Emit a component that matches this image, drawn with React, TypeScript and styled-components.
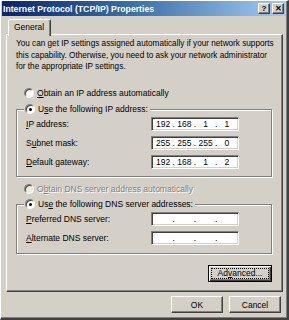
import React from 'react'
import styled, { createGlobalStyle } from 'styled-components'

const face = '#d4d0c8'
const shadow = '#808080'
const darkShadow = '#404040'

const GlobalStyle = createGlobalStyle`
  html, body {
    margin: 0;
    padding: 0;
    background: ${face};
  }
  * {
    box-sizing: border-box;
  }
`

const Window = styled.div`
  width: 289px;
  height: 320px;
  background: ${face};
  border-style: solid;
  border-width: 1px 2px 2px 1px;
  border-color: #fff ${darkShadow} ${darkShadow} #fff;
  box-shadow: inset -1px -1px ${shadow};
  font-family: 'Liberation Sans', Arial, sans-serif;
  font-size: 8.5px;
  color: #000;
  display: flex;
  flex-direction: column;
  padding: 0 1px 0 1px;
`

const TitleBar = styled.div`
  height: 15px;
  display: flex;
  align-items: center;
  justify-content: space-between;
  padding: 0 2px 0 1px;
  background: linear-gradient(to right, #0a246a 0%, #3a6ea5 45%, #a6caf0 100%);
`

const TitleText = styled.span`
  color: #fff;
  font-weight: bold;
  font-size: 8.7px;
  white-space: nowrap;
`

const TitleButtons = styled.div`
  display: flex;
  gap: 2px;
`

const TitleButton = styled.div`
  width: 12px;
  height: 11px;
  background: ${face};
  border-style: solid;
  border-width: 1px;
  border-color: #fff ${darkShadow} ${darkShadow} #fff;
  box-shadow: inset -1px -1px ${shadow};
  display: flex;
  align-items: center;
  justify-content: center;
  font-weight: bold;
  font-size: 8px;
  line-height: 1;
`

const TabStrip = styled.div`
  display: flex;
  padding: 3px 0 0 6px;
  position: relative;
  z-index: 1;
`

const Tab = styled.div`
  height: 17px;
  padding: 0 6px 2px 5px;
  margin-bottom: -2px;
  background: ${face};
  border-style: solid;
  border-width: 1px 1px 0 1px;
  border-color: #fff ${darkShadow} transparent #fff;
  border-radius: 2px 2px 0 0;
  box-shadow: inset -1px 0 ${shadow};
  display: flex;
  align-items: center;
`

const Panel = styled.div`
  margin: 0 3px 0 4px;
  height: 258px;
  border-style: solid;
  border-width: 1px;
  border-color: #fff ${darkShadow} ${darkShadow} #fff;
  box-shadow: inset -1px -1px ${shadow};
  padding: 3px 10px 0 9px;
  display: flex;
  flex-direction: column;
`

const Paragraph = styled.p`
  margin: 0;
  font-size: 8.2px;
  line-height: 11.5px;
  white-space: nowrap;
`

const RadioRow = styled.div<{ $disabled?: boolean; $top: number }>`
  display: flex;
  align-items: center;
  gap: 3px;
  height: 13px;
  margin-top: ${({ $top }) => $top}px;
  padding-left: 8px;
  color: ${({ $disabled }) => ($disabled ? shadow : '#000')};
  text-shadow: ${({ $disabled }) => ($disabled ? '1px 1px #fff' : 'none')};
  white-space: nowrap;
`

const RadioCircle = styled.span<{ $checked?: boolean; $disabled?: boolean }>`
  width: 10px;
  height: 10px;
  border-radius: 50%;
  flex: none;
  background: ${({ $disabled }) => ($disabled ? '#ece9e4' : '#fff')};
  border-style: solid;
  border-width: 1px;
  border-color: ${shadow} #fff #fff ${shadow};
  box-shadow: inset 1px 1px ${darkShadow};
  display: flex;
  align-items: center;
  justify-content: center;
  &::after {
    content: '';
    width: 3px;
    height: 3px;
    border-radius: 50%;
    background: #000;
    display: ${({ $checked }) => ($checked ? 'block' : 'none')};
  }
`

const Group = styled.fieldset<{ $top: number; $bottom: number }>`
  margin: ${({ $top }) => $top}px 0 0 0;
  padding: 1px 0 ${({ $bottom }) => $bottom}px 8px;
  border: 1px solid ${shadow};
  box-shadow: inset 1px 1px #fff, 1px 1px #fff;
  min-width: 0;
`

const Legend = styled.legend`
  padding: 0 2px 0 1px;
  margin-left: -1px;
  background: ${face};
`

const LegendRow = styled(RadioRow)`
  padding-left: 0;
`

const FieldRows = styled.div`
  display: flex;
  flex-direction: column;
  gap: 5px;
  margin-left: 1px;
`

const FieldRow = styled.div`
  display: flex;
  align-items: center;
  justify-content: space-between;
  padding-right: 32px;
  height: 14px;
`

const IpBox = styled.div`
  width: 88px;
  height: 14px;
  background: #fff;
  border-style: solid;
  border-width: 1px;
  border-color: ${shadow} #fff #fff ${shadow};
  box-shadow: inset 1px 1px ${darkShadow}, inset -1px -1px ${face};
  display: flex;
  align-items: center;
  padding: 0 2px;
`

const Octet = styled.span`
  flex: 1;
  text-align: center;
`

const Dot = styled.span`
  flex: none;
  width: 3px;
  text-align: center;
`

const ButtonBox = styled.div<{ $default?: boolean; $width: number }>`
  width: ${({ $width }) => $width}px;
  height: 17px;
  background: ${face};
  border-style: solid;
  border-width: 1px;
  border-color: ${({ $default }) => ($default ? '#000' : `#fff ${darkShadow} ${darkShadow} #fff`)};
  box-shadow: ${({ $default }) =>
    $default ? `inset 1px 1px #fff, inset -1px -1px ${darkShadow}, inset -2px -2px ${shadow}` : `inset -1px -1px ${shadow}`};
  display: flex;
  align-items: center;
  justify-content: center;
  padding: 3px;
`

const FocusRing = styled.span<{ $focus?: boolean }>`
  flex: 1;
  align-self: stretch;
  display: flex;
  align-items: center;
  justify-content: center;
  outline: ${({ $focus }) => ($focus ? '1px dotted #000' : 'none')};
`

const AdvancedRow = styled.div`
  display: flex;
  justify-content: flex-end;
  margin-top: 11px;
`

const Footer = styled.div`
  display: flex;
  justify-content: flex-end;
  gap: 6px;
  padding: 4px 5px 0 0;
`

const U = styled.span`
  text-decoration: underline;
  text-underline-offset: 1px;
`

type IpProps = { parts: string[] }

const IpField: React.FC<IpProps> = ({ parts }) => (
  <IpBox>
    {parts.map((p, i) => (
      <React.Fragment key={i}>
        {i > 0 && <Dot>.</Dot>}
        <Octet>{p}</Octet>
      </React.Fragment>
    ))}
  </IpBox>
)

const App: React.FC = () => {
  const empty = ['', '', '', '']
  return (
    <>
      <GlobalStyle />
      <Window>
        <TitleBar>
          <TitleText>Internet Protocol (TCP/IP) Properties</TitleText>
          <TitleButtons>
            <TitleButton>?</TitleButton>
            <TitleButton>✕</TitleButton>
          </TitleButtons>
        </TitleBar>
        <TabStrip>
          <Tab>General</Tab>
        </TabStrip>
        <Panel>
          <Paragraph>
            You can get IP settings assigned automatically if your network supports
            <br />
            this capability. Otherwise, you need to ask your network administrator
            <br />
            for the appropriate IP settings.
          </Paragraph>
          <RadioRow $top={14}>
            <RadioCircle />
            <span>
              <U>O</U>btain an IP address automatically
            </span>
          </RadioRow>
          <Group $top={3} $bottom={7}>
            <Legend>
              <LegendRow $top={0}>
                <RadioCircle $checked />
                <span>
                  U<U>s</U>e the following IP address:
                </span>
              </LegendRow>
            </Legend>
            <FieldRows>
              <FieldRow>
                <span>
                  <U>I</U>P address:
                </span>
                <IpField parts={['192', '168', '1', '1']} />
              </FieldRow>
              <FieldRow>
                <span>
                  S<U>u</U>bnet mask:
                </span>
                <IpField parts={['255', '255', '255', '0']} />
              </FieldRow>
              <FieldRow>
                <span>
                  <U>D</U>efault gateway:
                </span>
                <IpField parts={['192', '168', '1', '2']} />
              </FieldRow>
            </FieldRows>
          </Group>
          <RadioRow $disabled $top={6}>
            <RadioCircle $disabled />
            <span>
              O<U>b</U>tain DNS server address automatically
            </span>
          </RadioRow>
          <Group $top={2} $bottom={8}>
            <Legend>
              <LegendRow $top={0}>
                <RadioCircle $checked />
                <span>
                  Us<U>e</U> the following DNS server addresses:
                </span>
              </LegendRow>
            </Legend>
            <FieldRows>
              <FieldRow>
                <span>
                  <U>P</U>referred DNS server:
                </span>
                <IpField parts={empty} />
              </FieldRow>
              <FieldRow>
                <span>
                  <U>A</U>lternate DNS server:
                </span>
                <IpField parts={empty} />
              </FieldRow>
            </FieldRows>
          </Group>
          <AdvancedRow>
            <ButtonBox $default $width={64}>
              <FocusRing $focus>
                Ad<U>v</U>anced...
              </FocusRing>
            </ButtonBox>
          </AdvancedRow>
        </Panel>
        <Footer>
          <ButtonBox $width={52}>
            <FocusRing>OK</FocusRing>
          </ButtonBox>
          <ButtonBox $width={52}>
            <FocusRing>Cancel</FocusRing>
          </ButtonBox>
        </Footer>
      </Window>
    </>
  )
}

export default App
